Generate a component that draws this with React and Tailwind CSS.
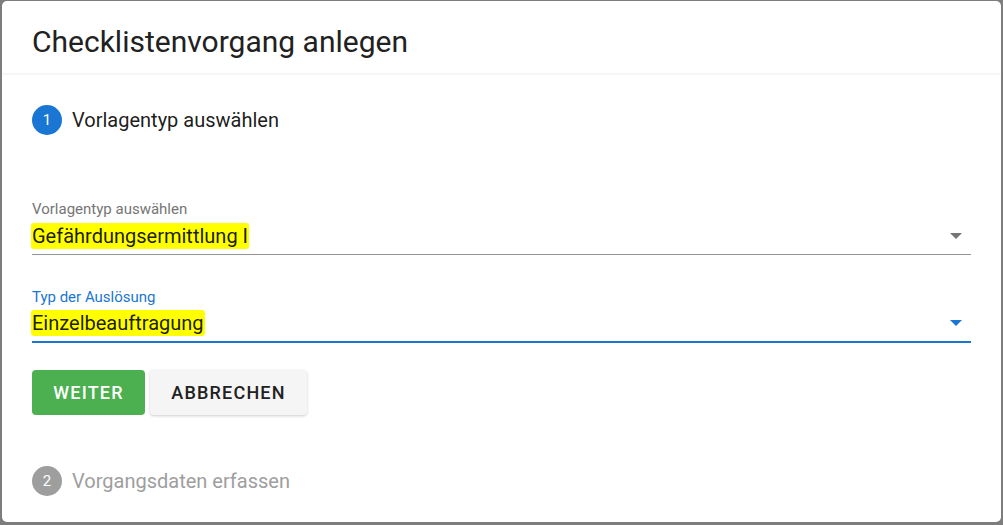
import React from 'react';

const FONT = { fontFamily: 'Roboto, "Liberation Sans", sans-serif' };

function Caret({ color }) {
  return (
    <svg width="12" height="6" viewBox="0 0 12 6" className="mr-[9px]">
      <polygon points="0,0 12,0 6,6" fill={color} />
    </svg>
  );
}

function StepHead({ n, label, active }) {
  return (
    <div className="flex items-center gap-[10px]">
      <div
        className={`w-[30px] h-[30px] rounded-full flex items-center justify-center text-white text-[15px] ${
          active ? 'bg-[#1976d2]' : 'bg-[#9e9e9e]'
        }`}
      >
        {n}
      </div>
      <div className={`text-[20px] ${active ? 'text-[#000000e6]' : 'text-[#9e9e9e]'}`}>{label}</div>
    </div>
  );
}

function SelectField({ label, value, focused }) {
  return (
    <div className="flex flex-col">
      <div className={`text-[15px] leading-[16px] ${focused ? 'text-[#1976d2]' : 'text-[#757575]'}`}>{label}</div>
      <div
        className={`flex items-center justify-between h-[38px] ${
          focused ? 'border-b-2 border-[#1976d2]' : 'border-b border-[#949494]'
        }`}
      >
        <span className="text-[20px] text-[#000000e6] bg-[#ffff00] px-[1px] -ml-[1px] leading-[26px] rounded-[3px]">
          {value}
        </span>
        <Caret color={focused ? '#1976d2' : '#757575'} />
      </div>
    </div>
  );
}

export default function App() {
  return (
    <div className="w-[1003px] h-[525px] bg-[#7d7d7d] pl-[2px] pt-[1px] pr-[2px] pb-[3px]" style={FONT}>
      <div className="h-full bg-white rounded-[5px] flex flex-col overflow-hidden">
        <div className="h-[72px] pl-[30px] pt-[22px] shadow-[0_1px_3px_rgba(0,0,0,0.08)] relative z-10">
          <h1 className="text-[30px] leading-[38px] text-[#212121]">Checklistenvorgang anlegen</h1>
        </div>
        <div className="flex-1 pl-[30px] pr-[30px] pt-[32px]">
          <StepHead n="1" label="Vorlagentyp auswählen" active />
          <div className="pt-[66px] flex flex-col gap-[34px]">
            <SelectField label="Vorlagentyp auswählen" value="Gefährdungsermittlung I" />
            <SelectField label="Typ der Auslösung" value="Einzelbeauftragung" focused />
          </div>
          <div className="flex gap-[5px] mt-[27px]">
            <button className="h-[45px] w-[113px] rounded-[4px] bg-[#4caf50] text-white text-[18px] font-medium tracking-[1.2px]">
              WEITER
            </button>
            <button className="h-[45px] w-[157px] rounded-[4px] bg-[#f5f5f5] text-[#212121] text-[18px] font-medium tracking-[1.2px] shadow-[0_1px_3px_rgba(0,0,0,0.2)]">
              ABBRECHEN
            </button>
          </div>
          <div className="mt-[51px]">
            <StepHead n="2" label="Vorgangsdaten erfassen" />
          </div>
        </div>
      </div>
    </div>
  );
}
